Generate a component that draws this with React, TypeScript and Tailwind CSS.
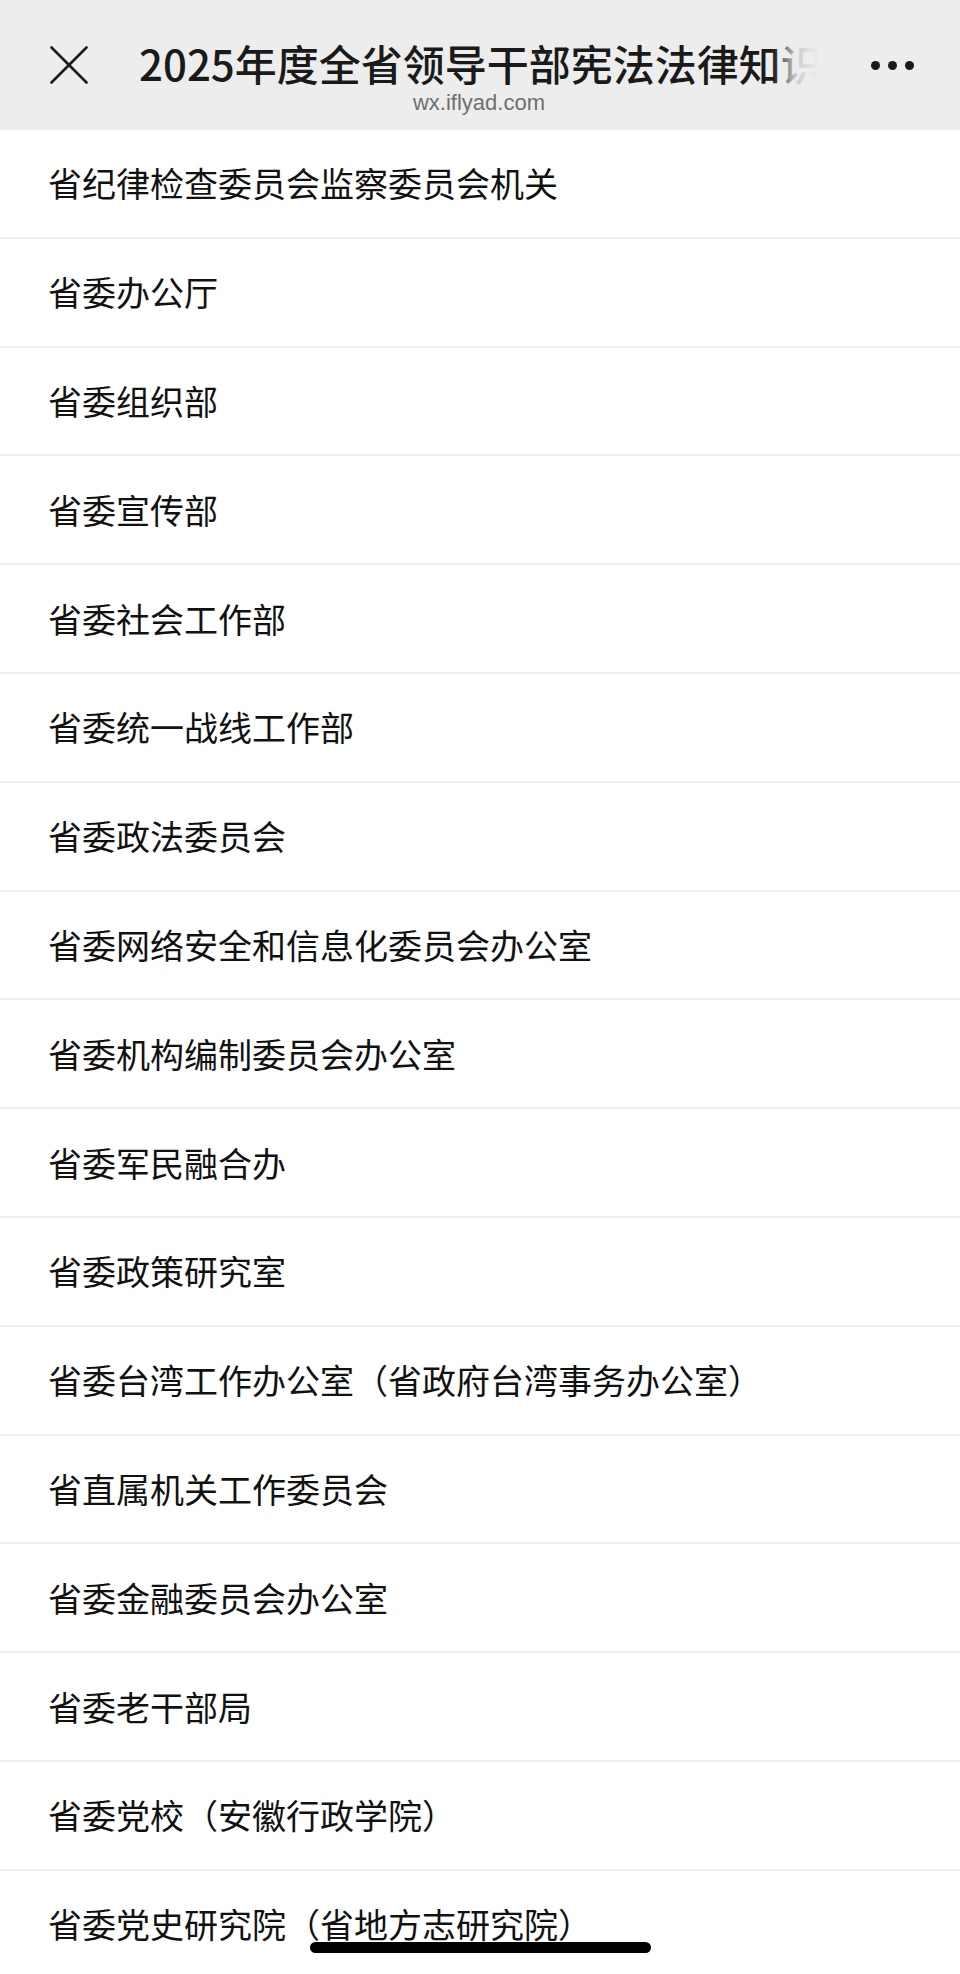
import React from "react";

const items = [
  "省纪律检查委员会监察委员会机关",
  "省委办公厅",
  "省委组织部",
  "省委宣传部",
  "省委社会工作部",
  "省委统一战线工作部",
  "省委政法委员会",
  "省委网络安全和信息化委员会办公室",
  "省委机构编制委员会办公室",
  "省委军民融合办",
  "省委政策研究室",
  "省委台湾工作办公室（省政府台湾事务办公室）",
  "省直属机关工作委员会",
  "省委金融委员会办公室",
  "省委老干部局",
  "省委党校（安徽行政学院）",
  "省委党史研究院（省地方志研究院）",
];

export default function App() {
  return (
    <div
      className="relative h-[1974px] w-[960px] overflow-hidden bg-white text-[#111]"
      style={{ fontFamily: '"Noto Sans CJK SC", "Noto Sans", sans-serif' }}
    >
      <header className="flex h-[130px] items-center bg-[#ededed]">
        <div className="flex w-[139px] items-center justify-start pl-[50px]">
          <svg width="38" height="38" viewBox="0 0 38 38">
            <path d="M1.5 1.5 L36.5 36.5 M36.5 1.5 L1.5 36.5" stroke="#1a1a1a" strokeWidth="2.6" strokeLinecap="round" />
          </svg>
        </div>
        <div className="flex min-w-0 flex-1 flex-col items-center gap-[4px] self-start pt-[40px]">
          <div className="relative w-full overflow-hidden">
            <div className="whitespace-nowrap text-[42px] font-medium leading-[46px] text-[#1a1a1a]">
              2025年度全省领导干部宪法法律知识竞赛
            </div>
            <div className="absolute right-0 top-0 h-full w-[46px] bg-gradient-to-r from-[#ededed]/0 via-[#ededed]/85 to-[#ededed]" />
          </div>
          <div
            className="text-[22px] leading-[25px] text-[#6f6f6f]"
            style={{ fontFamily: '"Liberation Sans", Arial, sans-serif' }}
          >
            wx.iflyad.com
          </div>
        </div>
        <div className="flex w-[141px] items-center justify-start gap-[8px] pl-[52px]">
          <span className="h-[9px] w-[9px] rounded-full bg-[#1a1a1a]" />
          <span className="h-[9px] w-[9px] rounded-full bg-[#1a1a1a]" />
          <span className="h-[9px] w-[9px] rounded-full bg-[#1a1a1a]" />
        </div>
      </header>
      <ul>
        {items.map((t) => (
          <li
            key={t}
            className="flex h-[108.8px] items-center border-b-2 border-[#efefef] pl-[48px] text-[34px] leading-[40px]"
          >
            {t}
          </li>
        ))}
      </ul>
      <div className="absolute bottom-[21px] left-[310px] h-[11px] w-[341px] rounded-full bg-black" />
    </div>
  );
}
